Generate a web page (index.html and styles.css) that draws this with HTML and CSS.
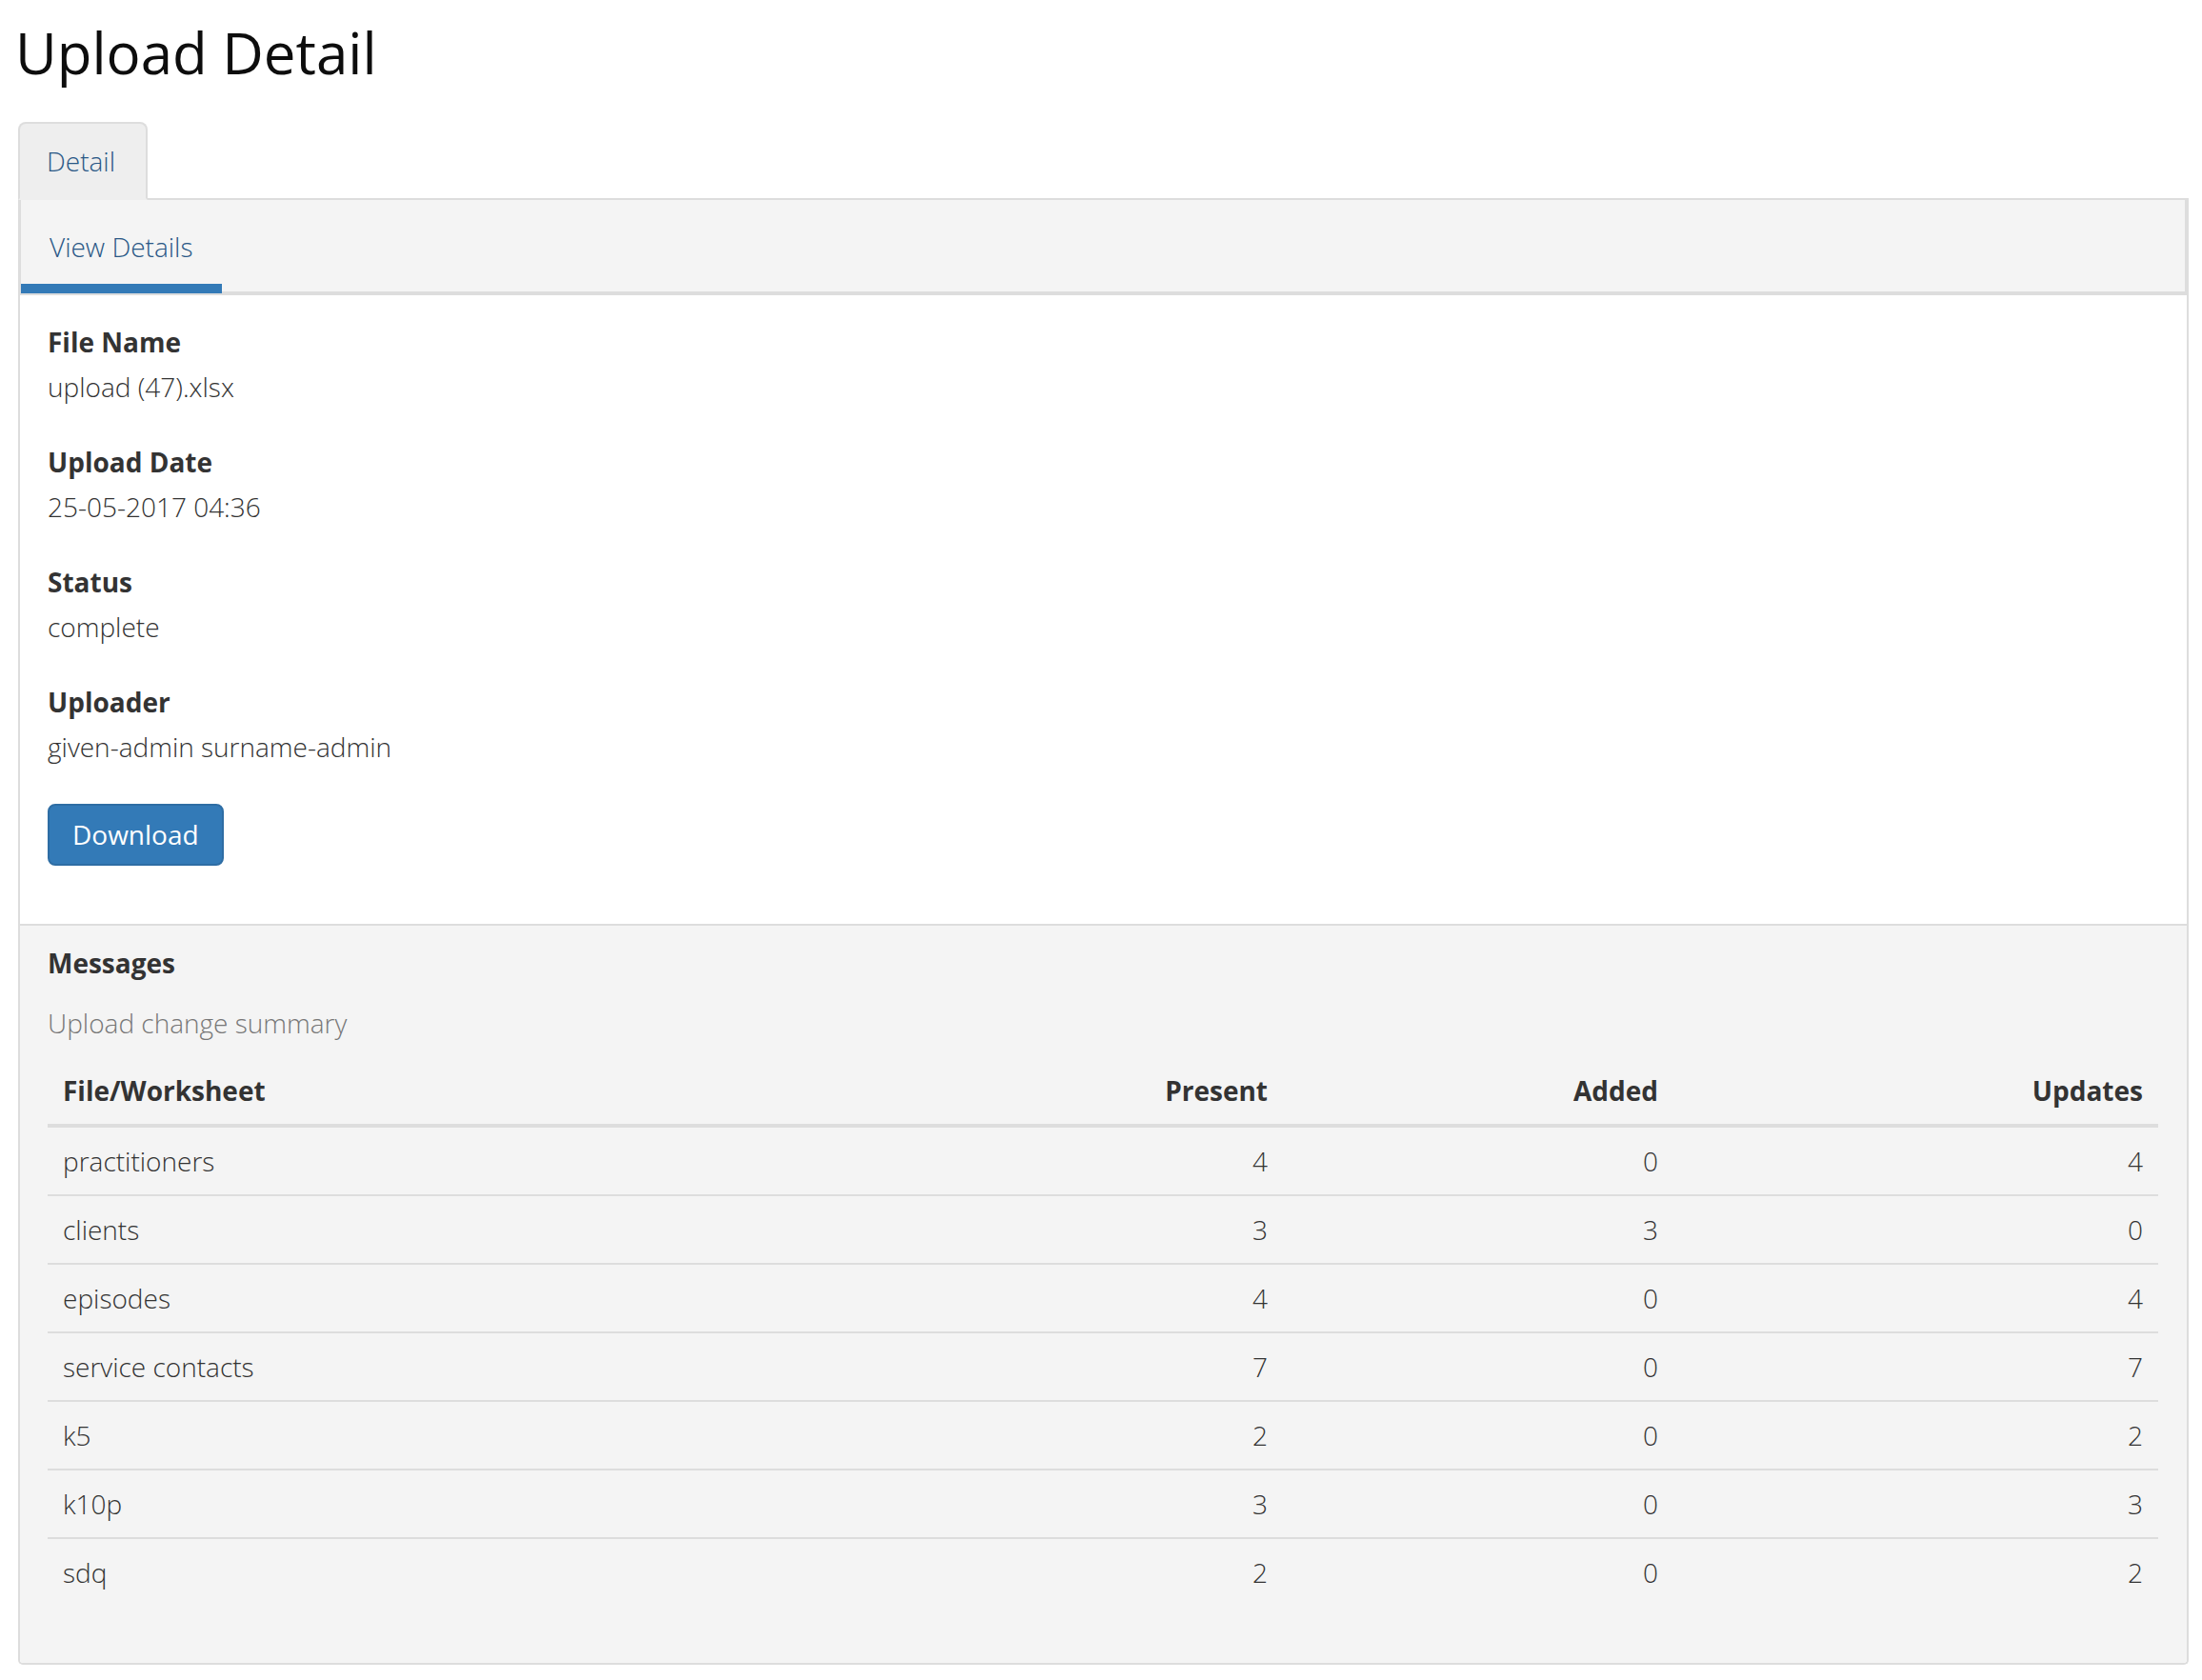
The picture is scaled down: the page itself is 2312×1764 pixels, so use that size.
FILE: index.html
```html
<!DOCTYPE html>
<html lang="en">
<head>
<meta charset="utf-8">
<title>Upload Detail</title>
<link rel="stylesheet" href="styles.css">
</head>
<body>
<div class="page">
  <h2 class="title">Upload Detail</h2>
  <ul class="tabs">
    <li class="tab active">Detail</li>
  </ul>
  <div class="panel">
    <div class="subnav">
      <span class="subnav-item active">View Details</span>
    </div>
    <div class="details">
      <div class="field">
        <div class="label">File Name</div>
        <div class="value">upload (47).xlsx</div>
      </div>
      <div class="field">
        <div class="label">Upload Date</div>
        <div class="value">25-05-2017 04:36</div>
      </div>
      <div class="field">
        <div class="label">Status</div>
        <div class="value">complete</div>
      </div>
      <div class="field">
        <div class="label">Uploader</div>
        <div class="value">given-admin surname-admin</div>
      </div>
      <button class="btn" type="button">Download</button>
    </div>
    <div class="messages">
      <div class="label">Messages</div>
      <table class="summary">
        <caption>Upload change summary</caption>
        <colgroup>
          <col class="col-name">
          <col class="col-present">
          <col class="col-added">
          <col class="col-updates">
        </colgroup>
        <thead>
          <tr><th>File/Worksheet</th><th class="num">Present</th><th class="num">Added</th><th class="num">Updates</th></tr>
        </thead>
        <tbody>
          <tr><td>practitioners</td><td class="num">4</td><td class="num">0</td><td class="num">4</td></tr>
          <tr><td>clients</td><td class="num">3</td><td class="num">3</td><td class="num">0</td></tr>
          <tr><td>episodes</td><td class="num">4</td><td class="num">0</td><td class="num">4</td></tr>
          <tr><td>service contacts</td><td class="num">7</td><td class="num">0</td><td class="num">7</td></tr>
          <tr><td>k5</td><td class="num">2</td><td class="num">0</td><td class="num">2</td></tr>
          <tr><td>k10p</td><td class="num">3</td><td class="num">0</td><td class="num">3</td></tr>
          <tr><td>sdq</td><td class="num">2</td><td class="num">0</td><td class="num">2</td></tr>
        </tbody>
      </table>
    </div>
  </div>
</div>
</body>
</html>
```

FILE: styles.css
```css
* {
  box-sizing: border-box;
}

html, body {
  margin: 0;
  padding: 0;
  background: #fff;
}

body {
  font-family: "Open Sans", "Liberation Sans", sans-serif;
  font-size: 28px;
  line-height: 40px;
  font-weight: 300;
  color: #333;
}

.page {
  padding: 0 14px 16px 19px;
}

.title {
  margin: 22px 0 40px -3px;
  font-size: 60px;
  line-height: 66px;
  font-weight: 400;
  color: #0d0d0d;
}

.tabs {
  display: flex;
  margin: 0;
  padding: 0;
  list-style: none;
  border-bottom: 2px solid #ddd;
}

.tab {
  margin-bottom: -2px;
  padding: 19px 32px 19px 28px;
  background: #eee;
  border: 2px solid #ddd;
  border-bottom-color: transparent;
  border-radius: 8px 8px 0 0;
  color: #2a5886;
}

.panel {
  border: 2px solid #ddd;
  border-top: 0;
  border-radius: 0 0 5px 5px;
}

.subnav {
  display: flex;
  background: #f4f4f4;
  border-left: 1px solid #ddd;
  border-right: 2px solid #ddd;
  border-bottom: 4px solid #ddd;
}

.subnav-item {
  margin-bottom: -2px;
  padding: 29px 31px 19px 30px;
  color: #2a5886;
  border-bottom: 10px solid #337ab7;
}

.details {
  padding: 29px 30px 61px 29px;
  background: #fff;
}

.label {
  font-weight: 700;
  margin-bottom: 7px;
}

.value {
  margin-bottom: 39px;
}

.btn {
  display: inline-block;
  margin-top: 1px;
  height: 65px;
  padding: 0 24px;
  font-family: inherit;
  font-size: 28px;
  font-weight: 400;
  line-height: 61px;
  color: #fff;
  background: #337ab7;
  border: 2px solid #2e6da4;
  border-radius: 8px;
}

.messages {
  background: #f4f4f4;
  border-top: 2px solid #ddd;
  padding: 19px 30px 60px 29px;
  border-radius: 0 0 4px 4px;
}

.summary {
  width: 100%;
  border-collapse: collapse;
  table-layout: fixed;
}

.summary caption {
  caption-side: top;
  text-align: left;
  color: #777;
  padding: 16px 0;
}

.col-name { width: 820px; }
.col-present { width: 477px; }
.col-added { width: 410px; }
.col-updates { width: 509px; }

.summary th,
.summary td {
  padding: 15px 16px;
  text-align: left;
  vertical-align: top;
}

.summary th {
  font-weight: 700;
  border-bottom: 4px solid #ddd;
}

.summary tbody tr + tr td {
  border-top: 2px solid #ddd;
}

.summary .num {
  text-align: right;
}
```
